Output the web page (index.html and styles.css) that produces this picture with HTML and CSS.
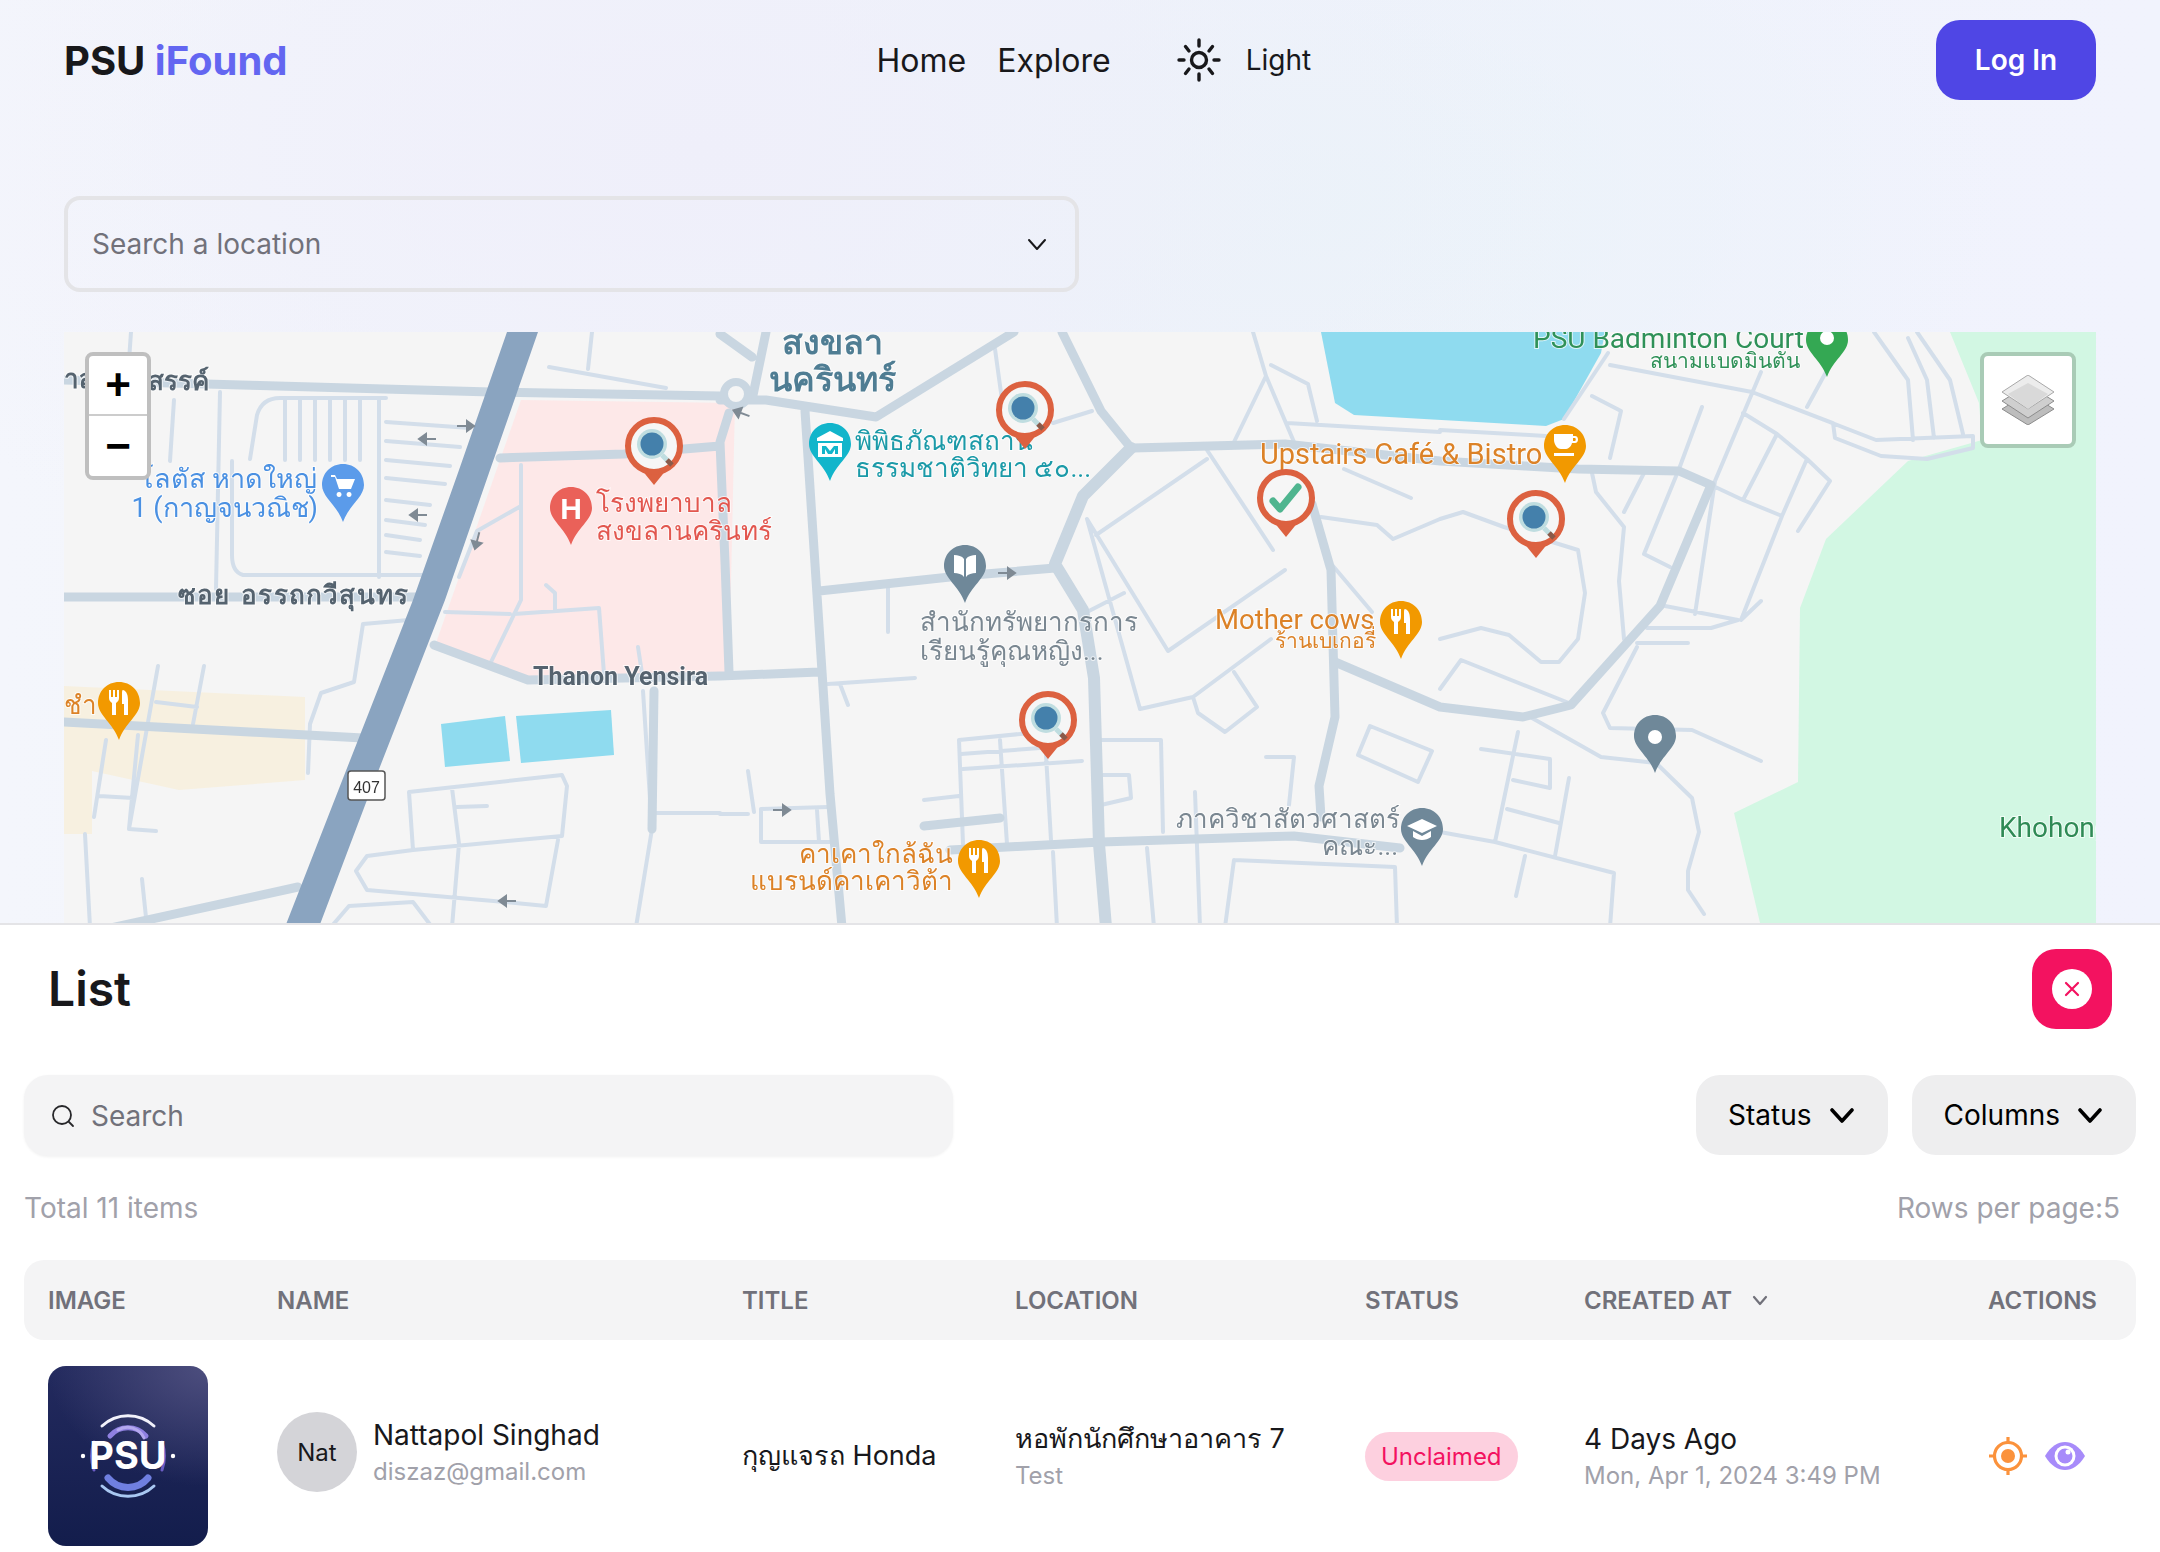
FILE: index.html
```html
<!DOCTYPE html>
<html>
	<head>
		<meta charset="UTF-8">
		<title>PSU iFound</title>
		<link rel="stylesheet" href="styles.css">
	</head>
	<body>
		<div class="page">
			<header class="header">
				<a class="logo" href="#">PSU <span class="logo-accent">iFound</span></a>
				<nav class="nav">
					<a href="#">Home</a>
					<a href="#">Explore</a>
					<span class="theme">
						<svg class="sun" viewBox="0 0 44 44" fill="none" stroke="#18181b" stroke-width="3.4" stroke-linecap="round">
							<circle cx="22" cy="22" r="7.5"/>
							<path d="M22 2v6M22 36v6M2 22h5M37 22h5M8.5 8.5l3.5 4.5M32 31l3.5 4.500M8.500 35.500l3.500-4.500M32 13l3.500-4.500"/>
						</svg>
						<span>Light</span>
					</span>
				</nav>
				<a class="login" href="#">Log In</a>
			</header>

			<div class="location-select">
				<span>Search a location</span>
				<svg class="select-chevron" viewBox="0 0 20 20" fill="none" stroke="#18181b" stroke-width="2" stroke-linecap="round" stroke-linejoin="round"><path d="M2 6l8 9 8-9"/></svg>
			</div>

			<section class="map">
				<svg class="map-canvas" viewBox="64 332 2032 591" preserveAspectRatio="none">
					<defs>
						<path id="drop" d="M0-21C12-21 21-12 21 0C21 12 6 20 0 37C-6 20-21 12-21 0C-21-12-12-21 0-21Z"/>
						<path id="arrow" d="M-9 0H5M1-5L8 0L1 5Z"/>
						<g id="fork">
							<path d="M-10-12V-4C-10-1-8 0-7 1V13H-3V1C-2 0 0-1 0-4V-12H-2V-5H-4V-12H-6V-5H-8V-12Z"/>
							<path d="M4-12C8-11 9-6 9-2V13H5V2H3V-8C3-10 3-12 4-12Z"/>
						</g>
						<g id="found">
							<path class="found-tip" d="M-17 18L0 39L17 18Z"/>
							<circle class="found-ring" cx="0" cy="0" r="26"/>
						</g>
						<g id="lens">
							<path class="lens-handle" d="M8 9L15 16"/>
							<path class="lens-grip" d="M13 14L18 19"/>
							<circle class="lens-glass" cx="-2" cy="-2" r="15"/>
							<circle class="lens-core" cx="-2" cy="-2" r="11.500"/>
						</g>
					</defs>

					<rect x="64" y="332" width="2032" height="591" fill="#f5f5f5"/>
					<polygon class="area-park" points="1950,332 1979,403 1982,440 1908,461 1826,539 1800,608 1798,782 1734,813 1761,927 2096,927 2096,332"/>
					<polygon class="area-sand" points="64,686 305,697 305,780 179,790 92,771 92,834 64,834"/>
					<polygon class="area-hospital" points="521,400 735,403 729,672 533,680 491,662 436,643"/>
					<polygon class="area-water" points="1321,332 1335,403 1354,415 1546,426 1564,419 1601,353 1605,332"/>
					<polygon class="area-water" points="441,724 505,716 510,761 445,767"/>
					<polygon class="area-water" points="516,716 611,710 614,755 521,763"/>

					<!-- small streets -->
					<path class="road-minor" d="M592 332L588 369M549 367L666 388M131 332L128 375M174 400L170 461M220 392L216 589M232 461V555Q232 572 243 575H422M257 415L250 459M257 415Q262 398 280 398H386M379 400V577M285 400V460M300 400V460M315 400V460M330 400V460M345 400V460M360 400V460M386 422L470 428M386 441L460 447M386 460L450 466M386 478L445 484M386 500L430 505M386 520L425 525M386 535L420 540M386 552L420 556
					M521 465V600L491 662M445 612L510 614M514 614L599 608L604 674M459 577L477 531L521 506M546 585L555 593V610M638 647L643 680M654 813H720
					M363 624L354 682L321 693L310 724L308 773M363 624L409 620M158 666L129 829L156 831M204 666L193 724M156 702L197 707M106 740L94 817M138 735L129 829M99 796L133 798M85 834L90 927M142 879L147 927
					M409 792L562 775L567 786L562 836L413 850ZM452 788L459 844L452 927M457 807L487 806M413 850L367 856L356 871L367 890L505 902L546 906L558 840M331 927L349 906L413 902L432 927
					M643 691L652 829L636 927M995 349L1002 400M1053 423L1092 411M828 684L915 678M840 684L848 705M888 587V632M748 771L754 812M720 814L748 814M761 809L828 807M761 809V842L830 842M817 810L819 842M924 800L959 796M1087 612L1124 593
					M959 740L1040 732M959 740L963 844M961 754L1040 748M963 769L1082 761M1000 740L1007 844M1046 755L1051 840M1101 740H1161L1163 832M1101 775H1129L1131 798L1101 805
					M1234 860L1395 867L1397 927M1234 860L1225 927M1147 848L1154 927M1053 852L1057 927M1195 792L1200 927
					M1253 332L1266 376L1294 442M1266 376L1234 442M1271 365L1308 384L1317 421M1287 423L1440 432M1344 469L1411 498M1321 517L1377 525L1393 539L1440 519M1333 566L1372 612M1207 450L1273 550M1096 535L1207 459M1087 519L1168 651L1285 570M1140 709L1193 697L1271 639M1193 697L1198 713L1225 732L1257 707L1234 672M1087 519L1140 709
					M1358 755L1370 726L1432 751L1418 782ZM1266 757H1294L1289 805
					M1610 365L1752 392L1876 440L1973 436V448L1927 459L1881 456L1835 438L1833 423L1752 392M1592 396L1621 411L1610 458M1608 353L1564 419M1440 430L1546 436
					M1702 407L1679 469L1644 554L1670 567M1761 372L1715 481L1695 614M1743 413L1777 434L1743 500L1711 485M1743 500L1782 516M1777 434L1807 459L1830 481L1798 531M1807 459L1782 516L1741 620L1761 601M1665 606L1738 620L1711 628H1647M1826 372L1807 407
					M1874 332L1908 380L1913 440M1908 338L1927 380L1934 438M1917 332L1950 380L1963 434M1592 473L1596 492L1624 527L1619 581L1624 639M1644 473L1624 512
					M1440 519L1463 512L1504 527L1578 550L1585 593L1578 639L1559 662H1541L1509 635L1481 628L1440 639M1440 689L1461 660L1569 703M1637 643L1688 643M1637 647L1603 713L1610 728L1692 730L1761 761
					M1532 718L1601 757L1656 763L1692 798L1699 832L1688 871V890L1704 914M1518 732L1495 842M1481 749L1550 759V788L1513 780M1507 809L1559 823M1569 778L1555 856M1440 832L1495 842L1614 873L1610 927M1525 856L1516 896"/>

					<!-- bigger roads -->
					<path class="road-mid" d="M64 380L491 392L720 396M500 458L624 454L720 446M64 597H432M434 645L528 680L720 676L819 672M64 722L363 738M106 929L298 887M720 400L766 400L876 417L1014 332M1062 332L1101 411L1131 448M819 591L950 577L1055 568M950 850L1101 842L1294 836L1400 848M1312 504L1331 570L1335 717L1319 786L1321 817M1335 662L1440 707L1523 717L1571 705L1660 606L1711 485M805 411L830 794L842 927M1133 448L1285 444L1440 461L1578 469L1679 471L1711 485M654 691L652 829M924 826L1000 818M766 332L752 400M720 334L752 357M729 413L720 442L725 562L729 672"/>
					<path class="road-major" d="M1131 448L1083 496L1055 564L1083 610L1094 678L1099 844L1106 927"/>
					<circle class="roundabout" cx="736" cy="394" r="12"/>

					<polygon class="highway" points="507,332 538,332 490,470 445,600 367,800 319,927 285,927 340,786 413,600 459,470"/>

					<use class="road-arrow" href="#arrow" transform="translate(466 426)"/>
					<use class="road-arrow" href="#arrow" transform="translate(427 439) rotate(180)"/>
					<use class="road-arrow" href="#arrow" transform="translate(418 515) rotate(180)"/>
					<use class="road-arrow" href="#arrow" transform="translate(477 541) rotate(105)"/>
					<use class="road-arrow" href="#arrow" transform="translate(507 901) rotate(180)"/>
					<use class="road-arrow" href="#arrow" transform="translate(1007 573)"/>
					<use class="road-arrow" href="#arrow" transform="translate(782 810)"/>
					<use class="road-arrow" href="#arrow" transform="translate(741 413) rotate(200)"/>

					<g class="shield">
						<rect x="348" y="771" width="37" height="29" rx="3"/>
						<text x="366.500" y="793" text-anchor="middle">407</text>
					</g>

					<!-- map labels -->
					<text class="lbl lbl-road" x="64" y="388">าส</text>
					<text class="lbl lbl-road" x="148" y="390">สรรค์</text>
					<text class="lbl lbl-big" x="832" y="354" text-anchor="middle">สงขลา</text>
					<text class="lbl lbl-big" x="832" y="391" text-anchor="middle">นครินทร์</text>
					<text class="lbl lbl-blue" x="317" y="488" text-anchor="end">โลตัส หาดใหญ่</text>
					<text class="lbl lbl-blue" x="318" y="517" text-anchor="end">1 (กาญจนวณิช)</text>
					<text class="lbl lbl-red" x="596" y="512">โรงพยาบาล</text>
					<text class="lbl lbl-red" x="596" y="540">สงขลานครินทร์</text>
					<text class="lbl lbl-road lbl-wide" x="178" y="604">ซอย อรรถกวีสุนทร</text>
					<text class="lbl lbl-teal" x="855" y="450">พิพิธภัณฑสถาน</text>
					<text class="lbl lbl-teal" x="855" y="477">ธรรมชาติวิทยา ๕๐...</text>
					<text class="lbl lbl-grey" x="920" y="631">สำนักทรัพยากรการ</text>
					<text class="lbl lbl-grey" x="920" y="660">เรียนรู้คุณหญิง...</text>
					<text class="lbl lbl-orange lbl-cafe" x="1260" y="464">Upstairs Café &amp; Bistro</text>
					<text class="lbl lbl-orange lbl-bakery" x="1215" y="629">Mother cows</text>
					<text class="lbl lbl-small-orange" x="1376" y="648" text-anchor="end">ร้านเบเกอรี่</text>
					<text class="lbl lbl-orange" x="64" y="714">ชำ</text>
					<text class="lbl lbl-street" x="533" y="685">Thanon Yensira</text>
					<text class="lbl lbl-green" x="1533" y="348">PSU Badminton Court</text>
					<text class="lbl lbl-small-green" x="1800" y="368" text-anchor="end">สนามแบดมินตัน</text>
					<text class="lbl lbl-orange" x="953" y="863" text-anchor="end">คาเคาใกล้ฉัน</text>
					<text class="lbl lbl-orange" x="953" y="890" text-anchor="end">แบรนด์คาเคาวิต้า</text>
					<text class="lbl lbl-grey" x="1400" y="828" text-anchor="end">ภาควิชาสัตวศาสตร์</text>
					<text class="lbl lbl-grey" x="1398" y="855" text-anchor="end">คณะ...</text>
					<text class="lbl lbl-park" x="1999" y="837">Khohong</text>

					<!-- place pins -->
					<g class="pin-blue" transform="translate(343 485)">
						<use href="#drop"/>
						<path class="pin-art" d="M-12-10H-8L-6-6H12L8 4H-4L-8-8H-12ZM-4 7A2.500 2.500 0 1 0-3.900 7ZM6 7A2.500 2.500 0 1 0 6.100 7Z"/>
					</g>
					<g class="pin-red" transform="translate(571 508)">
						<use href="#drop"/>
						<text class="pin-letter" x="0" y="11" text-anchor="middle">H</text>
					</g>
					<g class="pin-orange" transform="translate(119 703)"><use href="#drop"/><use class="pin-art" href="#fork" transform="translate(0 -1)"/></g>
					<g class="pin-orange" transform="translate(1401 622)"><use href="#drop"/><use class="pin-art" href="#fork" transform="translate(0 -1)"/></g>
					<g class="pin-orange" transform="translate(979 861)"><use href="#drop"/><use class="pin-art" href="#fork" transform="translate(0 -1)"/></g>
					<g class="pin-orange" transform="translate(1565 446)">
						<use href="#drop"/>
						<path class="pin-art" d="M-11-12H8V-10H10C14-10 14-3 10-3H7C6 1 3 3 0 3H-4C-8 3-11-2-11-6ZM8-8V-5H10C11-5 11-8 10-8ZM-11 7H9V10H-11Z"/>
					</g>
					<g class="pin-teal" transform="translate(830 444)">
						<use href="#drop"/>
						<path class="pin-art" d="M0-13L13-6V-3H-13V-6ZM-12-1H12V13H-12ZM-8 2V10H-5V5L-2 10H2L5 5V10H8V2H4L0 7L-4 2Z"/>
					</g>
					<g class="pin-slate" transform="translate(965 566)">
						<use href="#drop"/>
						<path class="pin-art" d="M-11-11C-7-11-3-10-1-7V11C-3 8-7 7-11 7ZM11-11C7-11 3-10 1-7V11C3 8 7 7 11 7Z"/>
					</g>
					<g class="pin-slate" transform="translate(1422 829)">
						<use href="#drop"/>
						<path class="pin-art" d="M0-10L15-3L0 4L-15-3ZM-9 2L0 7L9 2V8C4 12-4 12-9 8Z"/>
					</g>
					<g class="pin-green" transform="translate(1827 340)"><use href="#drop"/><circle class="pin-art" cx="0" cy="-2" r="7"/></g>
					<g class="pin-slate" transform="translate(1655 736)"><use href="#drop"/><circle class="pin-art" cx="0" cy="1" r="7"/></g>

					<!-- found / lost markers -->
					<g transform="translate(1025 410)"><use href="#found"/><use href="#lens"/></g>
					<g transform="translate(654 446)"><use href="#found"/><use href="#lens"/></g>
					<g transform="translate(1048 720)"><use href="#found"/><use href="#lens"/></g>
					<g transform="translate(1536 519)"><use href="#found"/><use href="#lens"/></g>
					<g transform="translate(1286 498)">
						<use href="#found"/>
						<path class="check" d="M-13 3L-6 11L12-11"/>
					</g>
				</svg>

				<div class="zoom-bar">
					<button class="zoom-btn">+</button>
					<button class="zoom-btn">−</button>
				</div>
				<div class="layers">
					<svg viewBox="0 0 52 50" width="52" height="50">
						<path d="M26 18L52 34L26 50L0 34Z" fill="#bdbdbd" stroke="#8c8c8c"/>
						<path d="M26 10L52 26L26 43L0 26Z" fill="#cfcfcf" stroke="#8c8c8c"/>
						<path d="M26 0L52 17L26 34L0 17Z" fill="#ececec" stroke="#a8a8a8"/>
						<path d="M26 8L46 19L26 34L6 19Z" fill="#d9d9d9"/>
					</svg>
				</div>
			</section>

			<section class="panel">
				<div class="panel-head">
					<h2>List</h2>
					<button class="close-btn">
						<span class="close-dot">
							<svg viewBox="0 0 16 16" width="16" height="16" fill="none" stroke="#f31260" stroke-width="2.200" stroke-linecap="round"><path d="M2 2l12 12M14 2L2 14"/></svg>
						</span>
					</button>
				</div>

				<div class="toolbar">
					<div class="search">
						<svg viewBox="0 0 24 24" width="24" height="24" fill="none" stroke="#27272a" stroke-width="1.800" stroke-linecap="round"><circle cx="11" cy="11" r="9"/><path d="M18 18l4 4"/></svg>
						<span>Search</span>
					</div>
					<div class="filters">
						<button class="filter">Status
							<svg viewBox="0 0 24 24" width="24" height="24" fill="none" stroke="#000" stroke-width="3.600" stroke-linecap="round" stroke-linejoin="round"><path d="M2 7l10 11L22 7"/></svg>
						</button>
						<button class="filter">Columns
							<svg viewBox="0 0 24 24" width="24" height="24" fill="none" stroke="#000" stroke-width="3.600" stroke-linecap="round" stroke-linejoin="round"><path d="M2 7l10 11L22 7"/></svg>
						</button>
					</div>
				</div>

				<div class="counts">
					<span>Total 11 items</span>
					<span>Rows per page:5</span>
				</div>

				<div class="row thead">
					<div>Image</div>
					<div>Name</div>
					<div>Title</div>
					<div>Location</div>
					<div>Status</div>
					<div class="sortable">Created at
						<svg viewBox="0 0 16 16" width="16" height="16" fill="none" stroke="#71717a" stroke-width="2.200" stroke-linecap="round" stroke-linejoin="round"><path d="M2 5l6 7 6-7"/></svg>
					</div>
					<div class="th-actions">Actions</div>
				</div>

				<div class="row tbody">
					<div class="thumb">
						<svg viewBox="0 0 100 100" width="100" height="100" fill="none" stroke-linecap="round">
							<path d="M24 20A38 38 0 0 1 76 20" stroke="#f2f2fb" stroke-width="3"/>
							<path d="M24 80A38 38 0 0 0 76 80" stroke="#a9c8f2" stroke-width="3"/>
							<path d="M16 36A42 42 0 0 0 16 64" stroke="#6a5cc4" stroke-width="3"/>
							<path d="M84 36A42 42 0 0 1 84 64" stroke="#6a5cc4" stroke-width="3"/>
							<path d="M32 30A24 24 0 0 1 68 30" stroke="#8f80e0" stroke-width="5"/>
							<path d="M40 24A18 18 0 0 1 66 32" stroke="#b4a8ee" stroke-width="3"/>
							<path d="M30 72A26 26 0 0 0 70 72" stroke="#6f7fe0" stroke-width="7"/>
							<circle cx="5" cy="50" r="2.200" fill="#fff"/>
							<circle cx="95" cy="50" r="2.200" fill="#fff"/>
							<text class="thumb-text" x="50" y="63" text-anchor="middle">PSU</text>
						</svg>
					</div>
					<div class="user">
						<span class="avatar">Nat</span>
						<span class="stack">
							<span class="primary">Nattapol Singhad</span>
							<span class="secondary">diszaz@gmail.com</span>
						</span>
					</div>
					<div class="primary thai">กุญแจรถ Honda</div>
					<div class="stack">
						<span class="primary thai">หอพักนักศึกษาอาคาร 7</span>
						<span class="secondary">Test</span>
					</div>
					<div><span class="chip">Unclaimed</span></div>
					<div class="stack">
						<span class="primary">4 Days Ago</span>
						<span class="secondary">Mon, Apr 1, 2024 3:49 PM</span>
					</div>
					<div class="actions">
						<svg viewBox="0 0 38 38" width="38" height="38" fill="none" stroke="#fb923c" stroke-width="3.200"><circle cx="19" cy="19" r="13.500"/><circle cx="19" cy="19" r="7" fill="#fb923c" stroke="none"/><path d="M19 0v6M19 32v6M0 19h6M32 19h6"/></svg>
						<svg viewBox="0 0 40 28" width="40" height="28"><path d="M0 14C6 4 13 0 20 0S34 4 40 14C34 24 27 28 20 28S6 24 0 14Z" fill="#a78bfa"/><circle cx="20" cy="14" r="10.500" fill="#fff"/><circle cx="20" cy="14" r="7.500" fill="#a78bfa"/><circle cx="23" cy="10" r="2.500" fill="#fff"/></svg>
					</div>
				</div>
			</section>
		</div>
	</body>
</html>
```

FILE: styles.css
```css
*{padding:0;margin:0;box-sizing:border-box;}
a{text-decoration:none;color:inherit;}
button{font-family:inherit;border:0;outline:none;background:none;}
html,body{height:100%;}
body{font-family:Inter,"Noto Sans","Noto Sans CJK SC",sans-serif;color:#18181b;overflow:hidden;}

.page{height:1552px;display:flex;flex-direction:column;padding-top:20px;background:radial-gradient(ellipse 900px 500px at 700px 150px,#efeffa 0%,rgba(239,239,250,0) 100%),radial-gradient(ellipse 700px 400px at 1300px 200px,#eaf3f9 0%,rgba(234,243,249,0) 100%),linear-gradient(90deg,#f4f6fc 0%,#f0f2fb 50%,#f1f3fd 100%);}

.header{display:flex;align-items:center;height:80px;padding:0 64px;flex:none;}
.logo{font-size:40px;font-weight:700;white-space:nowrap;}
.logo-accent{color:#6366f1;}
.nav{display:flex;align-items:center;gap:31px;margin-left:589px;font-size:32px;}
.theme{display:flex;align-items:center;gap:25px;margin-left:35px;font-size:28px;}
.sun{width:44px;height:44px;}
.login{margin-left:auto;width:160px;height:80px;display:flex;align-items:center;justify-content:center;background:#4f46e5;color:#fff;font-size:28px;font-weight:600;border-radius:24px;}

.location-select{flex:none;width:1015px;height:96px;margin:96px 0 40px 64px;padding:0 28px 0 24px;display:flex;align-items:center;justify-content:space-between;border:4px solid #e4e4e7;border-radius:16px;font-size:28px;color:#71717a;}
.select-chevron{width:20px;height:20px;}

.map{position:relative;flex:none;height:591px;margin:0 64px;overflow:hidden;}
.map-canvas{display:block;width:100%;height:100%;filter:blur(.7px);}

.area-park{fill:#d2f7e3;}
.area-sand{fill:#f7f0e0;}
.area-hospital{fill:#fde8e8;}
.area-water{fill:#8fdbef;}
.highway{fill:#8aa4c0;}
.road-minor,.road-mid,.road-major{fill:none;stroke-linejoin:round;stroke-linecap:round;}
.road-minor{stroke:#d3deea;stroke-width:4;}
.road-mid{stroke:#c9d6e1;stroke-width:9;}
.road-major{stroke:#c9d6e1;stroke-width:12;}
.roundabout{fill:#f5f5f5;stroke:#c9d6e1;stroke-width:8;}
.road-arrow{fill:#7f8a94;stroke:#7f8a94;stroke-width:2;}
.shield rect{fill:#fff;stroke:#555;stroke-width:1.5;}
.shield text{font-family:"Liberation Sans",sans-serif;font-size:16px;fill:#333;}

.lbl{font-family:Roboto,"Noto Sans",sans-serif;font-size:26px;paint-order:stroke;stroke:#fff;stroke-width:2px;stroke-opacity:.7;}
.lbl-road{fill:#55636f;font-weight:700;font-size:26px;}
.lbl-wide{letter-spacing:1.2px;word-spacing:3px;}
.lbl-street{fill:#55636f;font-weight:700;font-size:25px;}
.lbl-big{fill:#4f7d93;font-weight:700;font-size:34px;}
.lbl-blue{fill:#4a90e2;font-size:27px;}
.lbl-red{fill:#e2574f;}
.lbl-teal{fill:#1b9aa8;}
.lbl-grey{fill:#7a8791;}
.lbl-orange{fill:#dc8227;}
.lbl-cafe{font-size:29px;}
.lbl-bakery{font-size:27.5px;}
.lbl-small-orange{fill:#dc8227;font-size:21px;}
.lbl-green{fill:#2f9158;font-size:28px;}
.lbl-small-green{fill:#2f9158;font-size:21px;}
.lbl-park{fill:#2f8a55;font-size:28px;}

.pin-blue{fill:#5b9bea;}
.pin-red{fill:#ea6159;}
.pin-orange{fill:#f29900;}
.pin-teal{fill:#12b5cb;}
.pin-slate{fill:#6f8899;}
.pin-green{fill:#34a853;}
.pin-art{fill:#fff;}
.pin-letter{fill:#fff;font-family:"Liberation Sans",sans-serif;font-weight:700;font-size:30px;}

.found-ring{fill:#f6f6f6;stroke:#dc6140;stroke-width:6;}
.found-tip{fill:#dc6140;}
.lens-handle{stroke:#bfdde0;stroke-width:5;}
.lens-grip{stroke:#8a5a4a;stroke-width:5;}
.lens-glass{fill:#bfdde0;}
.lens-core{fill:#4480ab;}
.check{fill:none;stroke:#4fb58f;stroke-width:7;stroke-linecap:round;stroke-linejoin:round;}

.zoom-bar{position:absolute;left:21px;top:20px;width:66px;border:4px solid #bfbfbf;border-radius:8px;background:#fff;display:flex;flex-direction:column;}
.zoom-btn{height:60px;font-family:"Liberation Sans",sans-serif;font-size:44px;font-weight:700;line-height:58px;color:#000;}
.zoom-btn:first-child{border-bottom:2px solid #ccc;}
.layers{position:absolute;left:1916px;top:20px;width:96px;height:96px;background:#fff;border:4px solid #a9cbb6;border-radius:8px;display:flex;align-items:center;justify-content:center;}

.panel{flex:1;min-height:0;background:#fff;border-top:2px solid #e4e4e7;padding:0 24px;}
.panel-head{height:150px;display:flex;justify-content:space-between;align-items:flex-start;padding:24px 24px 0 24px;}
.panel-head h2{font-size:48px;font-weight:600;line-height:80px;}
.close-btn{width:80px;height:80px;display:flex;align-items:center;justify-content:center;background:#f31260;border-radius:24px;}
.close-dot{width:40px;height:40px;border-radius:50%;background:#fff;display:flex;align-items:center;justify-content:center;}

.toolbar{display:flex;justify-content:space-between;height:81px;}
.search{width:929px;display:flex;align-items:center;gap:16px;padding-left:27px;background:#f4f4f5;border-radius:24px;box-shadow:0 1px 3px rgba(0,0,0,.06);font-size:28px;color:#71717a;}
.filters{display:flex;gap:24px;}
.filter{height:80px;padding:0 34px 0 32px;display:flex;align-items:center;gap:18px;background:#eeeeef;border-radius:24px;font-size:28px;color:#000;}

.counts{display:flex;justify-content:space-between;align-items:center;height:52px;margin-top:26px;padding-right:16px;font-size:28px;color:#a1a1aa;}

.row{display:grid;grid-template-columns:229px 465px 273px 350px 219px 404px 1fr;align-items:center;padding:0 40px 0 24px;}
.thead{height:80px;margin-top:26px;background:#f4f4f5;border-radius:20px;font-size:24px;font-weight:600;color:#71717a;text-transform:uppercase;}
.sortable{display:flex;align-items:center;gap:20px;}
.th-actions{white-space:nowrap;}
.tbody{margin-top:26px;}

.thumb{width:160px;height:180px;border-radius:18px;display:flex;align-items:center;justify-content:center;background:radial-gradient(ellipse 160px 120px at 100% 0%,#4d4e7e 0%,rgba(77,78,126,0) 100%),linear-gradient(180deg,#232a5e 0%,#131d4c 100%);}
.thumb-text{fill:#fff;font-family:Inter,sans-serif;font-weight:700;font-size:38px;}

.user{display:flex;align-items:center;gap:16px;margin-bottom:8px;}
.avatar{width:80px;height:80px;border-radius:50%;background:#d4d4d8;display:flex;align-items:center;justify-content:center;font-size:24px;}
.stack{display:flex;flex-direction:column;gap:2px;}
.primary{font-size:28px;line-height:38px;white-space:nowrap;}
.thai{font-size:27px;}
.secondary{font-size:24px;line-height:32px;color:#a1a1aa;white-space:nowrap;}
.chip{display:inline-flex;align-items:center;height:49px;padding:0 16px;border-radius:25px;background:#fdd0df;color:#f31260;font-size:24px;}
.actions{display:flex;align-items:center;gap:18px;margin-left:1px;}
```
